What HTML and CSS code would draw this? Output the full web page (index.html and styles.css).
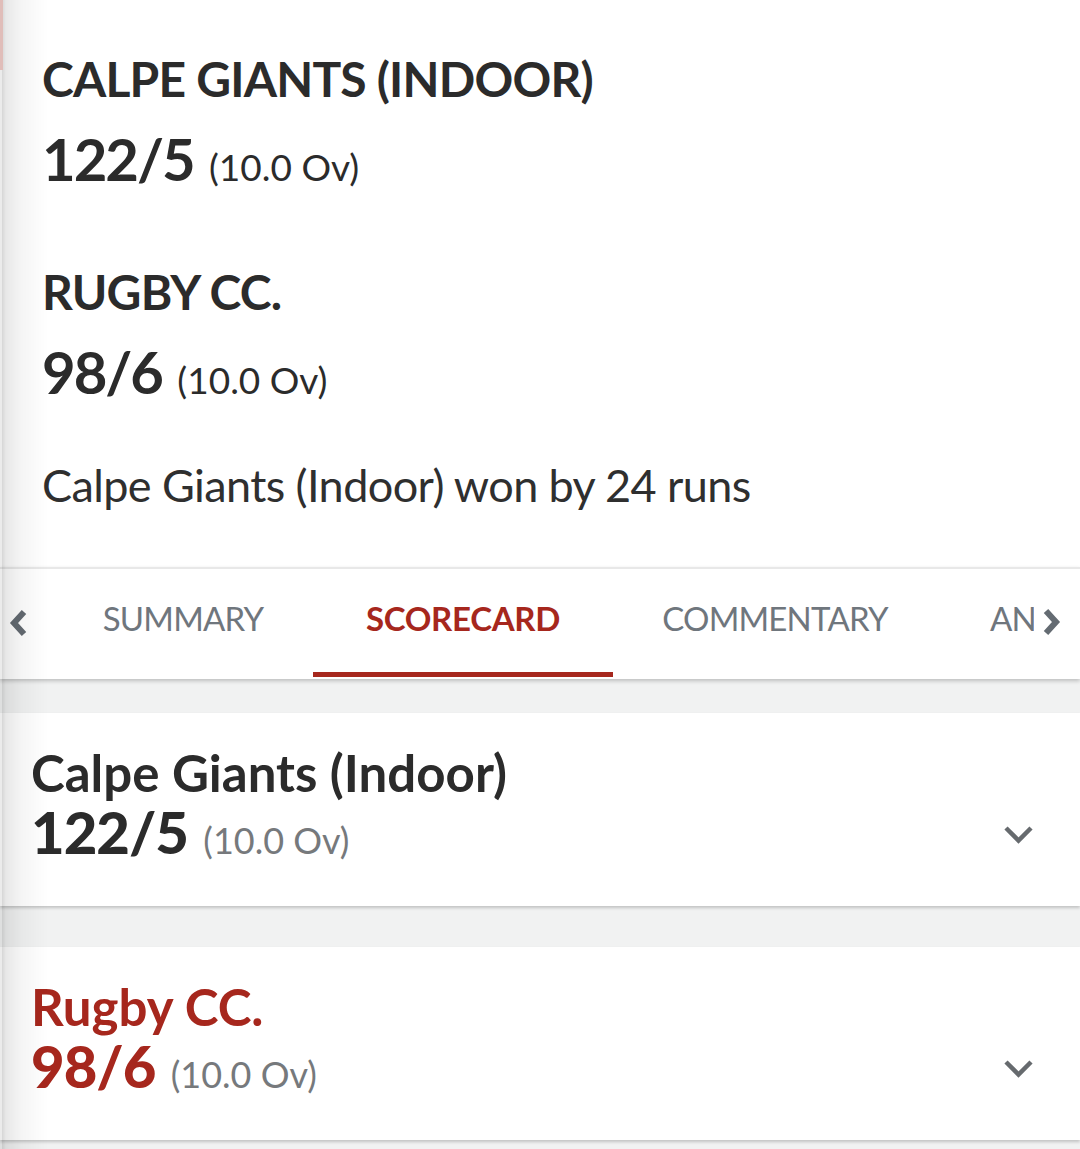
FILE: index.html
```html
<!DOCTYPE html>
<html>
<head>
<meta charset="utf-8">
<link rel="stylesheet" href="styles.css">
</head>
<body>
<div class="edge-shadow"></div>
<div class="edge-red"></div>
<section class="hero">
  <div class="team">
    <div class="team-name">CALPE GIANTS (INDOOR)</div>
    <div class="team-score"><span class="runs">122/5</span> <span class="overs">(10.0 Ov)</span></div>
  </div>
  <div class="team team-second">
    <div class="team-name">RUGBY CC.</div>
    <div class="team-score"><span class="runs">98/6</span> <span class="overs">(10.0 Ov)</span></div>
  </div>
  <p class="result">Calpe Giants (Indoor) won by 24 runs</p>
</section>
<nav class="tabs">
  <div class="tab-track">
    <div class="tab tab-summary">SUMMARY</div>
    <div class="tab tab-scorecard tab-active">SCORECARD</div>
    <div class="tab tab-commentary">COMMENTARY</div>
    <div class="tab tab-analysis">ANALYSIS</div>
  </div>
  <div class="tab-arrow tab-arrow-left">
    <svg width="20" height="30" viewBox="0 0 20 30"><polyline points="16,4 6,15 16,26" fill="none" stroke="#646b72" stroke-width="6"/></svg>
  </div>
  <div class="tab-arrow tab-arrow-right">
    <svg width="20" height="30" viewBox="0 0 20 30"><polyline points="4,4 14,15 4,26" fill="none" stroke="#646b72" stroke-width="6"/></svg>
  </div>
</nav>
<main class="cards">
  <div class="card">
    <div class="card-info">
      <div class="card-name">Calpe Giants (Indoor)</div>
      <div class="card-score"><span class="card-runs">122/5</span> <span class="card-overs">(10.0 Ov)</span></div>
    </div>
    <svg class="card-chevron" width="31" height="19" viewBox="0 0 31 19"><polyline points="3,3 15.5,15.5 28,3" fill="none" stroke="#666a6e" stroke-width="4.5"/></svg>
  </div>
  <div class="card card-highlight">
    <div class="card-info">
      <div class="card-name">Rugby CC.</div>
      <div class="card-score"><span class="card-runs">98/6</span> <span class="card-overs">(10.0 Ov)</span></div>
    </div>
    <svg class="card-chevron" width="31" height="19" viewBox="0 0 31 19"><polyline points="3,3 15.5,15.5 28,3" fill="none" stroke="#666a6e" stroke-width="4.5"/></svg>
  </div>
</main>
</body>
</html>
```
FILE: styles.css
```css
html, body {
  margin: 0;
  padding: 0;
}
body {
  background: #f1f2f2;
  font-family: "Lato", "Liberation Sans", sans-serif;
  color: #2b2b2b;
  width: 1080px;
  overflow: hidden;
}
.edge-shadow {
  position: fixed;
  left: 0;
  top: 0;
  bottom: 0;
  width: 46px;
  background: linear-gradient(to right, rgba(0,0,0,0.16) 0, rgba(0,0,0,0.09) 4px, rgba(0,0,0,0.04) 20px, rgba(0,0,0,0) 46px);
  border-left: 2px solid rgba(0,0,0,0.08);
  z-index: 10;
  pointer-events: none;
}
.edge-red {
  position: fixed;
  left: 0;
  top: 0;
  width: 3px;
  height: 70px;
  background: #e0bdb9;
  z-index: 11;
}
.hero {
  background: #fff;
  padding: 49px 0 54px 42px;
}
.team-second {
  margin-top: 74px;
}
.team-name {
  font-size: 48px;
  font-weight: 700;
  line-height: 60px;
  letter-spacing: -0.8px;
  color: #2b2b2b;
}
.team-score {
  margin-top: 19px;
  font-size: 60px;
  line-height: 60px;
  height: 60px;
}
.runs {
  font-weight: 700;
  font-size: 58px;
  letter-spacing: -2px;
}
.overs {
  font-weight: 400;
  font-size: 37px;
  color: #2b2b2b;
}
.result {
  margin: 56px 0 0;
  font-size: 45px;
  line-height: 56px;
  font-weight: 400;
  letter-spacing: -0.6px;
  color: #2f2f2f;
}
.tabs {
  position: relative;
  background: #fff;
  border-top: 2px solid #e8e8e8;
  height: 110px;
  box-shadow: 0 2px 4px rgba(0,0,0,0.22);
  overflow: hidden;
  z-index: 2;
}
.tab-track {
  display: flex;
  padding-left: 53px;
  white-space: nowrap;
}
.tab {
  box-sizing: border-box;
  height: 108px;
  padding-top: 29px;
  font-size: 33px;
  line-height: 40px;
  letter-spacing: -0.8px;
  color: #6f767d;
  text-align: center;
  border-bottom: 5px solid transparent;
  flex: none;
}
.tab-summary { width: 260px; }
.tab-scorecard { width: 300px; }
.tab-commentary { width: 324px; }
.tab-analysis { width: 300px; text-align: left; padding-left: 53px; }
.tab-active {
  color: #a6271d;
  font-weight: 700;
  letter-spacing: -0.3px;
  border-bottom-color: #a6271d;
}
.tab-arrow {
  position: absolute;
  top: 0;
  height: 108px;
  display: flex;
  align-items: center;
  background: #fff;
}
.tab-arrow-left {
  left: 0;
  width: 40px;
  padding-left: 8px;
  box-sizing: border-box;
  background: transparent;
}
.tab-arrow-right {
  right: 0;
  width: 46px;
  padding-left: 8px;
  box-sizing: border-box;
  padding-bottom: 3px;
}
.cards {
  padding-top: 34px;
}
.card {
  display: flex;
  justify-content: space-between;
  align-items: flex-start;
  background: #fff;
  height: 193px;
  box-sizing: border-box;
  padding: 35px 46px 0 31px;
  box-shadow: 0 2px 3px rgba(0,0,0,0.2);
  margin-bottom: 41px;
}
.card-name {
  font-size: 51px;
  line-height: 50px;
  font-weight: 700;
  color: #2b2b2b;
}
.card-score {
  margin-top: 3px;
  font-size: 60px;
  line-height: 60px;
  height: 60px;
}
.card-runs {
  font-weight: 900;
  font-size: 58px;
  letter-spacing: -1px;
}
.card-overs {
  font-size: 36px;
  color: #76797c;
}
.card-chevron {
  margin-top: 77px;
  flex: none;
}
.card-highlight .card-name,
.card-highlight .card-runs {
  color: #a6271d;
}
```
